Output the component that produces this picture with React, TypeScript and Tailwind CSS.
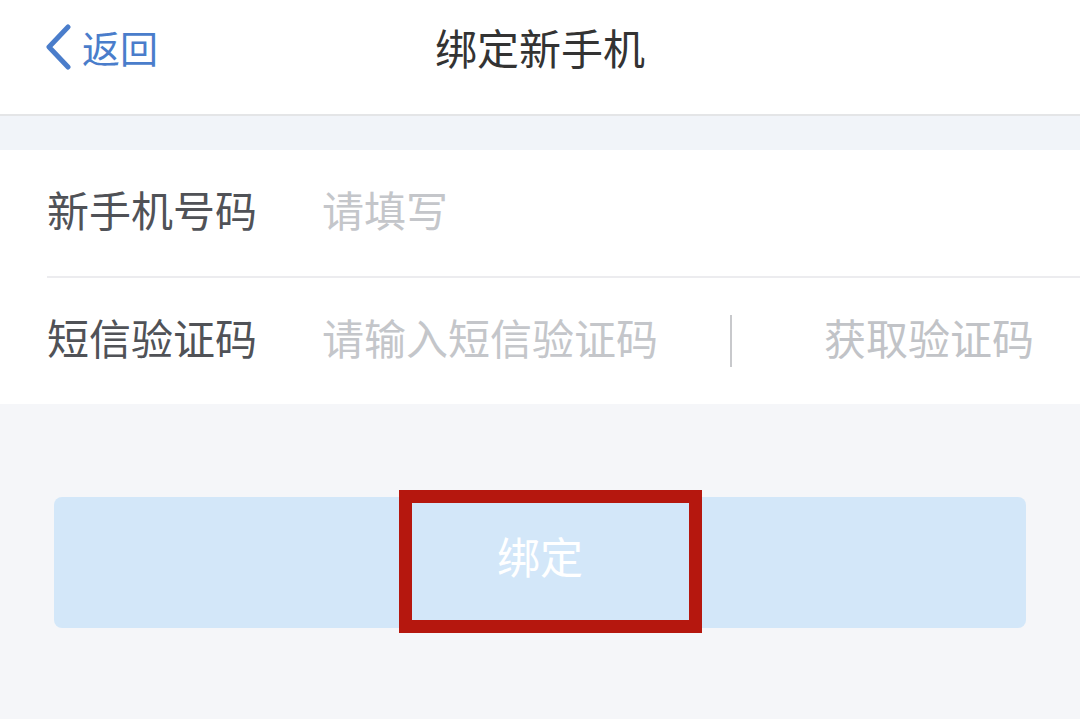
import React from 'react';

const font = { fontFamily: '"Noto Sans CJK SC", "Noto Sans", sans-serif' };

function Header() {
  return (
    <div className="relative flex h-[116px] items-center justify-center border-b-2 border-[#e4e5e7] bg-white pb-[20px]">
      <div className="absolute left-[44px] top-0 flex h-full items-center gap-[10px] pb-[20px] text-[#4a7dcb]">
        <svg width="28" height="46" viewBox="0 0 28 46" fill="none">
          <path d="M24 3 L5 23 L24 43" stroke="#4a7dcb" strokeWidth="5" strokeLinecap="round" strokeLinejoin="round" />
        </svg>
        <span className="text-[38px] leading-none">返回</span>
      </div>
      <h1 className="text-[42px] leading-none text-[#333333]">绑定新手机</h1>
    </div>
  );
}

function Row({ label, placeholder, action }: { label: string; placeholder: string; action?: string }) {
  return (
    <div className="flex h-[126px] items-center pr-[46px]">
      <div className="flex h-full flex-1 items-center">
        <span className="w-[275px] pb-[9px] text-[42px] leading-none text-[#505257]">{label}</span>
        <span className="pb-[9px] text-[42px] leading-none text-[#c4c6ca]">{placeholder}</span>
      </div>
      {action && (
        <div className="flex items-center">
          <div className="mr-[92px] h-[52px] w-[2px] bg-[#c8c9cc]" />
          <span className="pb-[9px] text-[42px] leading-none text-[#c1c3c7]">{action}</span>
        </div>
      )}
    </div>
  );
}

export default function App() {
  return (
    <div className="min-h-[719px] w-[1080px] bg-[#f5f6f9]" style={font}>
      <Header />
      <div className="h-[34px] bg-[#f1f4f9]" />
      <div className="bg-white pl-[47px]">
        <div className="border-b-2 border-[#ececef]">
          <Row label="新手机号码" placeholder="请填写" />
        </div>
        <Row label="短信验证码" placeholder="请输入短信验证码" action="获取验证码" />
      </div>
      <div className="px-[54px] pt-[93px]">
        <div className="relative flex h-[131px] items-center justify-center rounded-[8px] bg-[#d3e7f9]">
          <span className="pb-[14px] text-[43px] leading-none text-white">绑定</span>
          <div className="absolute left-[345px] top-[-7px] h-[143px] w-[303px] border-[13px] border-[#b5170e]" />
        </div>
      </div>
    </div>
  );
}
